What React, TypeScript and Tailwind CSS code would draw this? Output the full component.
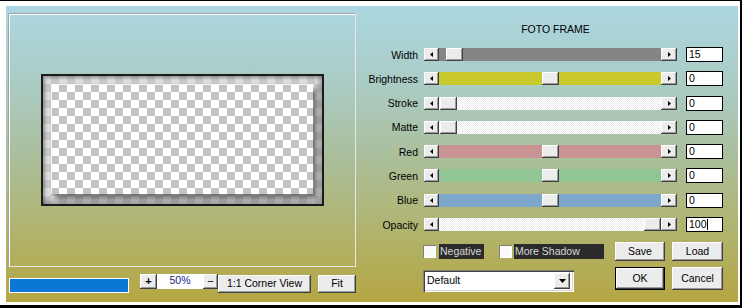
import React from "react"

const bevel =
    "bg-[#ececec] shadow-[inset_-1px_-1px_#404040,inset_1px_1px_#ffffff,inset_-2px_-2px_#9a9a9a]"

const dither =
    "bg-[repeating-conic-gradient(#ffffff_0_25%,#ececec_0_50%)] bg-[length:2px_2px]"

const sliders = [
    { label: "Width", value: "15", track: "bg-[#858585]", thumb: 7 },
    { label: "Brightness", value: "0", track: "bg-[#c9c82d]", thumb: 103 },
    { label: "Stroke", value: "0", track: dither, thumb: 1 },
    { label: "Matte", value: "0", track: dither, thumb: 1 },
    { label: "Red", value: "0", track: "bg-[#c99394]", thumb: 103 },
    { label: "Green", value: "0", track: "bg-[#91c694]", thumb: 103 },
    { label: "Blue", value: "0", track: "bg-[#7ea8cb]", thumb: 103 },
    { label: "Opacity", value: "100", track: dither, thumb: 205, caret: true },
]

const LeftArrow = () => (
    <svg width="3" height="5" viewBox="0 0 3 5">
        <path d="M3 0V5L0 2.5Z" fill="#000" />
    </svg>
)

const RightArrow = () => (
    <svg width="3" height="5" viewBox="0 0 3 5">
        <path d="M0 0V5L3 2.5Z" fill="#000" />
    </svg>
)

const SliderRow = ({ s }: { s: (typeof sliders)[number] }) => (
    <div className="flex items-center h-[15px]">
        <div className="w-[56px] text-right leading-[12px]">{s.label}</div>
        <div className="ml-[6px] flex h-[13px] w-[253px]">
            <div className={`w-[15px] h-full flex items-center justify-center ${bevel}`}>
                <LeftArrow />
            </div>
            <div className={`relative w-[222px] h-full ${s.track}`}>
                {/* thumb sits over the track */}
                <div className={`absolute top-0 h-[13px] w-[17px] ${bevel}`} style={{ left: s.thumb }} />
            </div>
            <div className={`w-[16px] h-full flex items-center justify-center ${bevel}`}>
                <RightArrow />
            </div>
        </div>
        <div className="ml-[9px] w-[37px] h-[15px] bg-white border border-black pl-[2px] leading-[13px] flex items-center">
            {s.value}
            {s.caret && <span className="inline-block w-px h-[11px] bg-black" />}
        </div>
    </div>
)

const Checkbox = () => (
    <div className="w-[13px] h-[13px] bg-[#fafafa] shadow-[inset_1px_1px_#808080,inset_-1px_-1px_#ffffff]" />
)

export default function App() {
    return (
        <div className="w-[742px] h-[308px] bg-white border-t border-r-2 border-b-[3px] border-black pt-[5px] pl-[6px] pr-[2px] pb-[3px] font-['Liberation_Sans',Arial,sans-serif] text-[10.5px] text-black">
            <div className="flex w-full h-full bg-[linear-gradient(180deg,#acd7e2_0%,#aacabf_30%,#abbf9d_50%,#b0b470_75%,#b5a642_100%)]">
                {/* preview column */}
                <div className="w-[356px] pl-[2px] pt-[7px] flex flex-col">
                    <div className="w-[348px] h-[254px] border border-t-[#a4a4a4] border-l-[#a4a4a4] border-r-[#e8e8e8] border-b-[#e8e8e8] shadow-[inset_1px_1px_#ffffff] flex items-center justify-center">
                        <div className="w-[283px] h-[132px] border-2 border-[#1c1c1c] bg-[repeating-conic-gradient(#c8c8c8_0_25%,#dcdcdc_0_50%)] bg-[length:16px_16px] shadow-[inset_2px_2px_3px_rgba(0,0,0,0.3),inset_-3px_-3px_4px_rgba(0,0,0,0.25)] pt-[8px] pl-[8px]">
                            <div className="w-[262px] h-[110px] bg-[repeating-conic-gradient(#c3c3c3_0_25%,#ffffff_0_50%)] bg-[length:16px_16px] shadow-[inset_1px_1px_#f4f4f4,4px_5px_5px_rgba(0,0,0,0.45)]" />
                        </div>
                    </div>
                    <div className="mt-[7px] flex items-start">
                        <div className="ml-[1px] mt-[4px] w-[120px] h-[15px] border border-white bg-[#0a76d6]" />
                        <div className={`ml-[11px] w-[17px] h-[15px] flex items-center justify-center font-bold text-[11px] ${bevel}`}>+</div>
                        <div className="w-[46px] h-[15px] bg-white text-[#1a1a8a] text-center leading-[13px]">50%</div>
                        <div className={`w-[15px] h-[15px] flex items-center justify-center text-[11px] ${bevel}`}>−</div>
                        <div className={`mt-[1px] w-[93px] h-[18px] flex items-center justify-center ${bevel}`}>1:1 Corner View</div>
                        <div className={`ml-[7px] mt-[1px] w-[38px] h-[18px] flex items-center justify-center ${bevel}`}>Fit</div>
                    </div>
                </div>

                {/* controls column */}
                <div className="flex-1 pt-[17px] flex flex-col">
                    <div className="pl-[11px] text-center leading-[12px]">FOTO FRAME</div>
                    <div className="mt-[12px] flex flex-col gap-[9.3px]">
                        {sliders.map((s) => (
                            <SliderRow key={s.label} s={s} />
                        ))}
                    </div>
                    <div className="mt-[10px] flex">
                        <div className="ml-[61px] w-[181px] flex flex-col">
                            <div className="h-[19px] flex items-center">
                                <Checkbox />
                                <div className="ml-[3px] w-[45px] h-[15px] bg-[#2b2b2b] text-[#d8d8d8] pl-[1px] leading-[15px]">Negative</div>
                                <div className="ml-[15px]">
                                    <Checkbox />
                                </div>
                                <div className="ml-[2px] w-[90px] h-[15px] bg-[#2b2b2b] text-[#d8d8d8] pl-[1px] leading-[15px]">More Shadow</div>
                            </div>
                            <div className="mt-[9px] w-[151px] h-[22px] bg-white shadow-[inset_1px_1px_#808080,inset_2px_2px_#404040,inset_-1px_-1px_#ffffff,inset_-2px_-2px_#d4d4d4] flex items-center pl-[4px] pr-[4px]">
                                <span className="flex-1">Default</span>
                                <div className={`w-[16px] h-[16px] flex items-center justify-center ${bevel}`}>
                                    <svg width="7" height="4" viewBox="0 0 7 4">
                                        <path d="M0 0H7L3.5 4Z" fill="#000" />
                                    </svg>
                                </div>
                            </div>
                        </div>
                        <div className="ml-[11px] flex flex-col">
                            <div className="flex gap-[7px]">
                                <div className={`w-[50px] h-[19px] flex items-center justify-center ${bevel}`}>Save</div>
                                <div className={`w-[51px] h-[19px] flex items-center justify-center ${bevel}`}>Load</div>
                            </div>
                            <div className="mt-[6px] flex gap-[7px]">
                                <div className="w-[50px] h-[23px] border border-black">
                                    <div className={`w-full h-full flex items-center justify-center ${bevel}`}>OK</div>
                                </div>
                                <div className={`w-[51px] h-[23px] flex items-center justify-center ${bevel}`}>Cancel</div>
                            </div>
                        </div>
                    </div>
                </div>
            </div>
        </div>
    )
}
